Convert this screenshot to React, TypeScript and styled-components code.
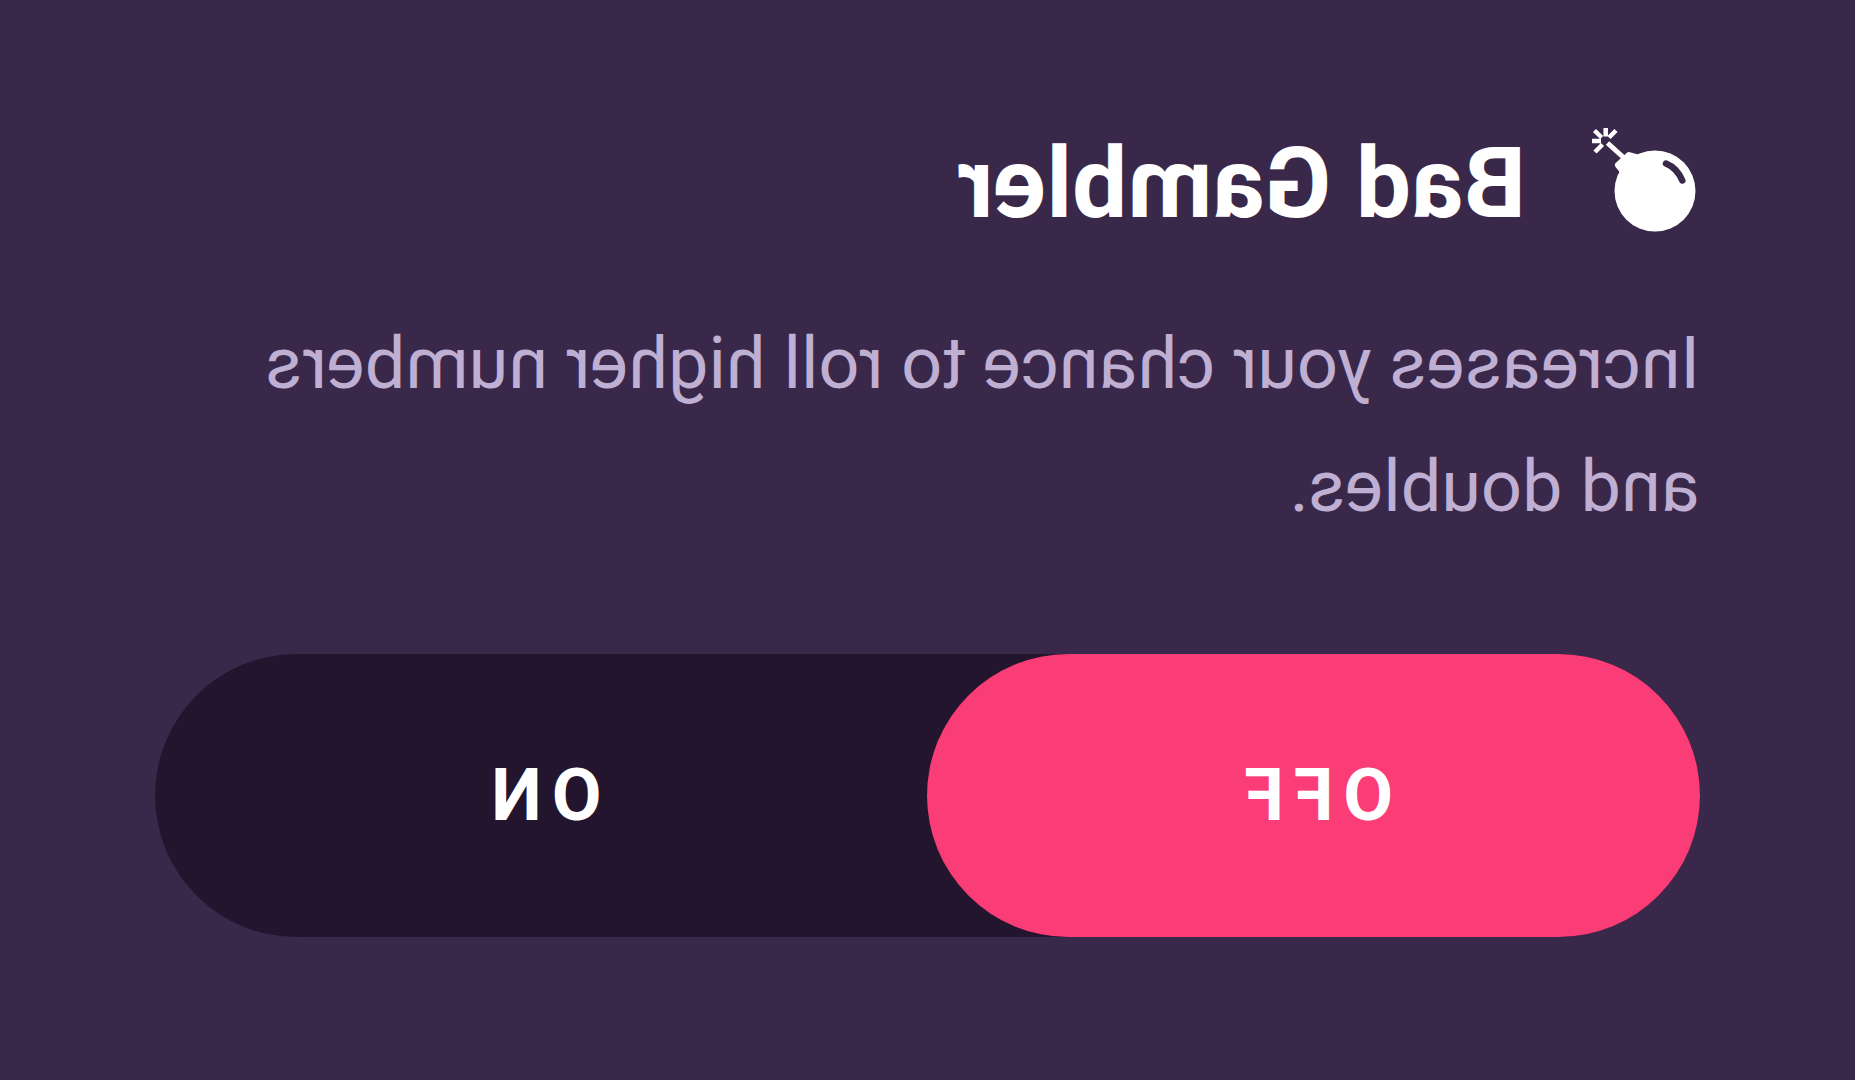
import React, { useState } from "react";
import styled, { createGlobalStyle } from "styled-components";

const GlobalStyle = createGlobalStyle`
  *, *::before, *::after { box-sizing: border-box; }
  body { margin: 0; background: #3a284b; }
`;

/* The whole card is flipped left to right. */
const Card = styled.main`
  min-height: 100vh;
  padding: 128px 155px;
  background: #3a284b;
  font-family: Roboto, "Liberation Sans", sans-serif;
  transform: scaleX(-1);
`;

const Header = styled.header`
  display: flex;
  align-items: center;
  gap: 62px;
`;

const Icon = styled.svg`
  flex: none;
  width: 112px;
  height: 112px;
`;

const Title = styled.h1`
  margin: 0;
  color: #ffffff;
  font-size: 98px;
  font-weight: 700;
  line-height: 112px;
`;

const Description = styled.p`
  margin: 62px 0 0;
  color: #bfafd3;
  font-size: 72px;
  line-height: 123px;
`;

const Toggle = styled.fieldset`
  display: grid;
  grid-template-columns: 1fr 1fr;
  height: 283px;
  margin: 106px 0 0;
  padding: 0;
  border: 0;
  border-radius: 142px;
  background: #23152d;
`;

const Option = styled.label`
  display: flex;
  align-items: center;
  justify-content: center;
  border-radius: 142px;
  color: #ffffff;
  font-size: 72px;
  font-weight: 700;
  letter-spacing: 10px;
  cursor: pointer;

  &:has(input:checked) { background: #fa3d77; }
  &:has(input:focus-visible) { outline: 4px solid #ffffff; }
`;

const Radio = styled.input`
  appearance: none;
  width: 0;
  height: 0;
  margin: 0;
  outline: none;
`;

const BombIcon = () => (
  <Icon viewBox="0 4 112 112" fill="none" aria-hidden="true">
    <circle cx="45" cy="67" r="40.5" fill="#fff" />
    <path
      d="M71 31.500L81.500 41L76 48L62 34Z"
      fill="#fff"
      stroke="#fff"
      strokeWidth="7"
      strokeLinejoin="round"
    />
    <path d="M92.500 19L77 33" stroke="#fff" strokeWidth="5" />
    <path
      d="M94.300 4V12.500M105.500 6.500L98.300 13.500M84 6.500L91 13.500M108 17H99M105 28L97.500 20.500"
      stroke="#fff"
      strokeWidth="4.500"
    />
    <path
      d="M34 39.500Q23 44 17.700 56.500"
      stroke="#3a284b"
      strokeWidth="6.500"
      strokeLinecap="round"
    />
  </Icon>
);

const choices = ["OFF", "ON"];

export default function App() {
  const [value, setValue] = useState("OFF");
  return (
    <>
      <GlobalStyle />
      <Card>
        <Header>
          <BombIcon />
          <Title>Bad Gambler</Title>
        </Header>
        <Description>Increases your chance to roll higher numbers and doubles.</Description>
        <Toggle aria-label="Bad Gambler">
          {choices.map((choice) => (
            <Option key={choice}>
              <Radio
                type="radio"
                name="bad-gambler"
                value={choice}
                checked={value === choice}
                onChange={() => setValue(choice)}
              />
              {choice}
            </Option>
          ))}
        </Toggle>
      </Card>
    </>
  );
}
